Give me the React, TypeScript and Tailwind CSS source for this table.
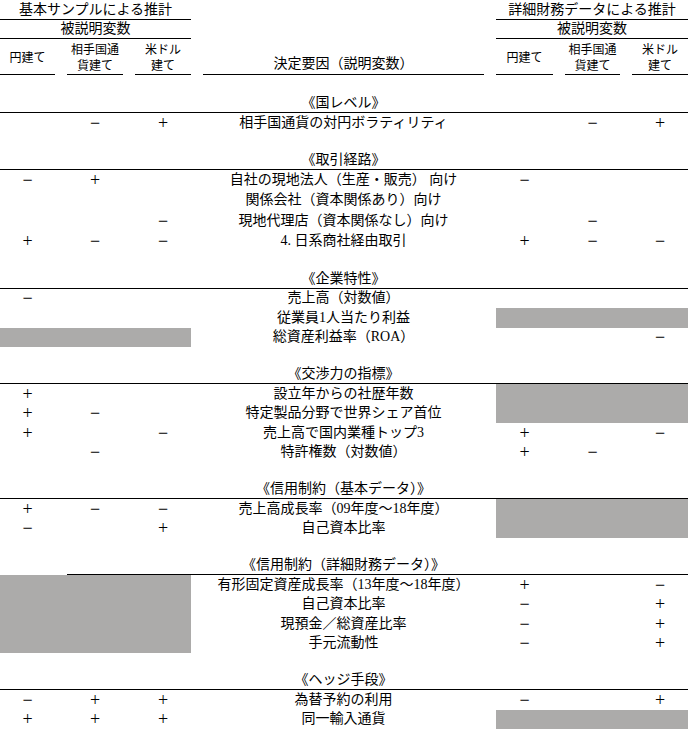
import React from 'react'

type Cell = string
type Row = {
  label: string
  left?: [Cell, Cell, Cell]
  right?: [Cell, Cell, Cell]
  grayLeft?: boolean
  grayRight?: boolean
}
type Section = { title: string; rows: Row[]; tall?: boolean; lineFromCol2?: boolean }

const sections: Section[] = [
  {
    title: '《国レベル》',
    rows: [{ label: '相手国通貨の対円ボラティリティ', left: ['', '−', '+'], right: ['', '−', '+'] }],
  },
  {
    title: '《取引経路》',
    tall: true,
    rows: [
      { label: '自社の現地法人（生産・販売） 向け', left: ['−', '+', ''], right: ['−', '', ''] },
      { label: '関係会社（資本関係あり）向け' },
      { label: '現地代理店（資本関係なし）向け', left: ['', '', '−'], right: ['', '−', ''] },
      { label: '4. 日系商社経由取引', left: ['+', '−', '−'], right: ['+', '−', '−'] },
    ],
  },
  {
    title: '《企業特性》',
    rows: [
      { label: '売上高（対数値）', left: ['−', '', ''] },
      { label: '従業員1人当たり利益', grayRight: true },
      { label: '総資産利益率（ROA）', grayLeft: true, right: ['', '', '−'] },
    ],
  },
  {
    title: '《交渉力の指標》',
    rows: [
      { label: '設立年からの社歴年数', left: ['+', '', ''], grayRight: true },
      { label: '特定製品分野で世界シェア首位', left: ['+', '−', ''], grayRight: true },
      { label: '売上高で国内業種トップ3', left: ['+', '', '−'], right: ['+', '', '−'] },
      { label: '特許権数（対数値）', left: ['', '−', ''], right: ['+', '−', ''] },
    ],
  },
  {
    title: '《信用制約（基本データ）》',
    rows: [
      { label: '売上高成長率（09年度～18年度）', left: ['+', '−', '−'], grayRight: true },
      { label: '自己資本比率', left: ['−', '', '+'], grayRight: true },
    ],
  },
  {
    title: '《信用制約（詳細財務データ）》',
    lineFromCol2: true,
    rows: [
      { label: '有形固定資産成長率（13年度～18年度）', grayLeft: true, right: ['+', '', '−'] },
      { label: '自己資本比率', grayLeft: true, right: ['−', '', '+'] },
      { label: '現預金／総資産比率', grayLeft: true, right: ['−', '', '+'] },
      { label: '手元流動性', grayLeft: true, right: ['−', '', '+'] },
    ],
  },
  {
    title: '《ヘッジ手段》',
    rows: [
      { label: '為替予約の利用', left: ['−', '+', '+'], right: ['−', '', '+'] },
      { label: '同一輸入通貨', left: ['+', '+', '+'], grayRight: true },
    ],
  },
]

const serif = "font-['Liberation_Serif','Noto_Sans_CJK_JP',serif]"
const sans = "font-['Noto_Sans_CJK_JP','Liberation_Sans',sans-serif]"

function Signs({ cells, widths, gray }: { cells?: [Cell, Cell, Cell]; widths: string[]; gray?: boolean }) {
  return (
    <div className={`flex gap-3 ${gray ? 'bg-[#acabaa]' : ''}`}>
      {widths.map((w, i) => (
        <div key={i} className={`${w} flex items-center justify-center text-[18px] leading-[18px]`}>
          {cells?.[i] ?? ''}
        </div>
      ))}
    </div>
  )
}

const L = ['w-[55px]', 'w-[56px]', 'w-[56px]']
const R = ['w-[57px]', 'w-[55px]', 'w-[56px]']

export default function App() {
  return (
    <div className={`w-[688px] h-[730px] overflow-hidden bg-white text-black ${serif}`}>
      {/* header */}
      <div className="flex h-[20px] text-[14px] leading-[20px]">
        <div className="w-[191px] border-b border-black text-center">基本サンプルによる推計</div>
        <div className="w-[305px]" />
        <div className="w-[192px] border-b border-black text-center">詳細財務データによる推計</div>
      </div>
      <div className="flex h-[19px] text-[14px] leading-[18px]">
        <div className="w-[191px] border-b border-black text-center">被説明変数</div>
        <div className="w-[305px]" />
        <div className="w-[192px] border-b border-black text-center">被説明変数</div>
      </div>
      <div className={`flex h-[36px] gap-3 text-[12px] leading-[16px] ${sans}`}>
        <div className="flex gap-3">
          <div className="w-[55px] border-b border-black flex items-center justify-center">円建て</div>
          <div className="w-[56px] border-b border-black flex flex-col items-center justify-center">
            <span>相手国通</span>
            <span>貨建て</span>
          </div>
          <div className="w-[56px] border-b border-black flex flex-col items-center justify-center">
            <span>米ドル</span>
            <span>建て</span>
          </div>
        </div>
        <div className={`w-[281px] border-b border-black flex items-end justify-center pb-[1px] text-[14px] leading-[18px] ${serif}`}>
          決定要因（説明変数）
        </div>
        <div className="flex gap-3">
          <div className="w-[57px] border-b border-black flex items-center justify-center">円建て</div>
          <div className="w-[55px] border-b border-black flex flex-col items-center justify-center">
            <span>相手国通</span>
            <span>貨建て</span>
          </div>
          <div className="w-[56px] border-b border-black flex flex-col items-center justify-center">
            <span>米ドル</span>
            <span>建て</span>
          </div>
        </div>
      </div>

      {sections.map((s, si) => (
        <div key={s.title}>
          <div className={si === 0 ? 'h-[19px]' : 'h-[18px]'} />
          <div className="flex h-[19px] text-[14px] leading-[18px]">
            <div className={s.lineFromCol2 ? 'w-[67px]' : 'w-[67px] border-b border-black'} />
            <div className="flex-1 border-b border-black flex">
              <div className="w-[136px]" />
              <div className="w-[281px] text-center">{s.title}</div>
            </div>
          </div>
          {s.rows.map((r) => (
            <div key={r.label} className={`flex gap-3 ${s.tall ? 'h-[20.5px]' : 'h-[19.5px]'}`}>
              <Signs cells={r.left} widths={L} gray={r.grayLeft} />
              <div className="w-[281px] flex items-center justify-center text-[14px] leading-[18px] whitespace-nowrap">
                {r.label}
              </div>
              <Signs cells={r.right} widths={R} gray={r.grayRight} />
            </div>
          ))}
        </div>
      ))}
    </div>
  )
}
